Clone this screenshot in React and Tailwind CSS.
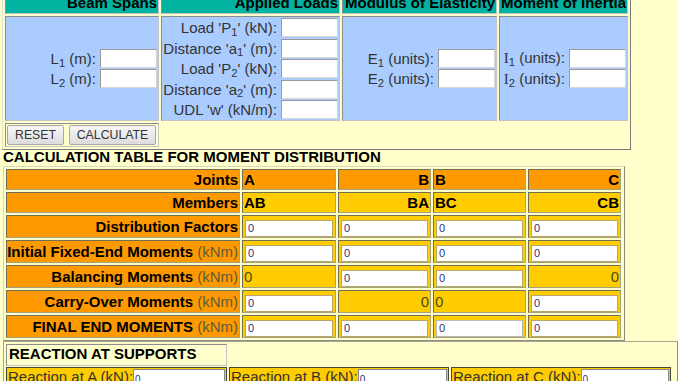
import React from 'react';

const inset = 'border border-t-[#8c8c8c] border-l-[#8c8c8c] border-b-[#c4c4c4] border-r-[#c4c4c4]';
const calcBorder = 'border border-t-[#6f6f52] border-l-[#6f6f52] border-b-[#a3a37c] border-r-[#a3a37c]';

const TopInput = () => (
    <input
        type="text"
        className="w-[57px] h-[19px] bg-white border border-t-[#9a9a9a] border-l-[#9a9a9a] border-b-[#d6d6d6] border-r-[#d6d6d6] outline-none"
    />
);

const Field = ({ children }) => (
    <div className="flex items-center justify-end h-[20.5px] gap-[4px]">
        <span className="text-[#333] whitespace-nowrap">{children}</span>
        <TopInput />
    </div>
);

const Kn = () => <span className="font-normal text-[#5c5c3c]">(kNm)</span>;

const CalcInput = ({ grey }) => (
    <div className={`bg-[#ffcc00] p-[2px] ${calcBorder}`}>
        <input
            type="text"
            defaultValue="0"
            className={`w-full h-full bg-white pl-[2px] text-[11px] text-[#2f2f6f] outline-none border ${grey ? 'border-[#b9b9b9]' : 'border-[#b8a66a]'}`}
        />
    </div>
);

const GoldCell = ({ right, children }) => (
    <div className={`bg-[#ffcc00] flex items-center text-[#4b4b16] ${right ? 'justify-end pr-[1px]' : 'pl-[1px]'} ${calcBorder}`}>
        {children}
    </div>
);

const Label = ({ children }) => (
    <div className={`bg-[#ff9900] flex items-center justify-end pr-[1px] font-bold text-black whitespace-nowrap ${calcBorder}`}>
        <span>{children}</span>
    </div>
);

const Reaction = ({ label }) => (
    <div className="bg-[#ffcc00] border border-[#4a4a30] flex items-start pl-[1px] h-[24px]">
        <span className="text-[#333] whitespace-nowrap">Reaction at {label} (kN):</span>
        <input
            type="text"
            defaultValue="0"
            className="flex-1 min-w-0 h-[21px] mt-[1px] mr-[1px] bg-white border border-[#8a8a8a] pl-[1px] text-[10px] text-[#2f2f6f] outline-none"
        />
    </div>
);

export default function App() {
    return (
        <div className="h-[381px] overflow-hidden bg-[#ffffcc] font-['Liberation_Sans',Arial,sans-serif] text-[15px] leading-[17px]">
            {/* Input section */}
            <div className="-mt-[11px] ml-[2px] w-[629px] p-[2px] border border-t-[#e0e0d0] border-l-[#e0e0d0] border-b-[#7c7c7c] border-r-[#7c7c7c]">
                <div className="grid grid-cols-[154px_179px_155px_129px] gap-[2px]">
                    {['Beam Spans', 'Applied Loads', 'Modulus of Elasticity', 'Moment of Inertia'].map((h) => (
                        <div key={h} className={`bg-[#00b3a0] h-[22px] pt-[1px] pr-[1px] text-right font-bold text-black whitespace-nowrap overflow-hidden ${inset}`}>
                            {h}
                        </div>
                    ))}

                    <div className={`bg-[#aaccff] h-[105px] flex flex-col justify-center pr-[1px] ${inset}`}>
                        <Field>L<sub>1</sub> (m):</Field>
                        <Field>L<sub>2</sub> (m):</Field>
                    </div>
                    <div className={`bg-[#aaccff] h-[105px] flex flex-col justify-center pr-[1px] ${inset}`}>
                        <Field>Load 'P<sub>1</sub>' (kN):</Field>
                        <Field>Distance 'a<sub>1</sub>' (m):</Field>
                        <Field>Load 'P<sub>2</sub>' (kN):</Field>
                        <Field>Distance 'a<sub>2</sub>' (m):</Field>
                        <Field>UDL 'w' (kN/m):</Field>
                    </div>
                    <div className={`bg-[#aaccff] h-[105px] flex flex-col justify-center pr-[1px] ${inset}`}>
                        <Field>E<sub>1</sub> (units):</Field>
                        <Field>E<sub>2</sub> (units):</Field>
                    </div>
                    <div className={`bg-[#aaccff] h-[105px] flex flex-col justify-center pr-[1px] ${inset}`}>
                        <Field><span className="font-['Liberation_Serif',serif]">I</span><sub>1</sub> (units):</Field>
                        <Field><span className="font-['Liberation_Serif',serif]">I</span><sub>2</sub> (units):</Field>
                    </div>

                    <div className={`h-[24px] p-[1px] flex gap-[5px] ${inset}`}>
                        <button className="w-[57px] h-[20px] rounded-[2px] border border-[#a9a9a9] bg-gradient-to-b from-[#f7f7f7] to-[#dcdcdc] text-[12.3px] leading-none text-[#333]">
                            RESET
                        </button>
                        <button className="w-[87px] h-[20px] rounded-[2px] border border-[#a9a9a9] bg-gradient-to-b from-[#f7f7f7] to-[#dcdcdc] text-[12.3px] leading-none text-[#333]">
                            CALCULATE
                        </button>
                    </div>
                </div>
            </div>

            <div className="pl-[3px] leading-[14px] font-bold text-black">CALCULATION TABLE FOR MOMENT DISTRIBUTION</div>

            {/* Moment distribution table */}
            <div className="mt-[2px] ml-[3px] w-[622px] p-[2px] border border-t-[#d8d8c0] border-l-[#d8d8c0] border-b-[#8c8c7c] border-r-[#8c8c7c]">
                <div className="grid grid-cols-[234px_94px_93px_93px_93px] grid-rows-[21px_21px_23px_23px_23px_23px_23px] gap-[2px]">
                    <Label>Joints</Label>
                    <div className={`bg-[#ff9900] pl-[1px] flex items-center font-bold ${calcBorder}`}>A</div>
                    <div className={`bg-[#ff9900] pr-[1px] flex items-center justify-end font-bold ${calcBorder}`}>B</div>
                    <div className={`bg-[#ff9900] pl-[1px] flex items-center font-bold ${calcBorder}`}>B</div>
                    <div className={`bg-[#ff9900] pr-[1px] flex items-center justify-end font-bold ${calcBorder}`}>C</div>

                    <Label>Members</Label>
                    <div className={`bg-[#ffcc00] pl-[1px] flex items-center font-bold ${calcBorder}`}>AB</div>
                    <div className={`bg-[#ffcc00] pr-[1px] flex items-center justify-end font-bold ${calcBorder}`}>BA</div>
                    <div className={`bg-[#ffcc00] pl-[1px] flex items-center font-bold ${calcBorder}`}>BC</div>
                    <div className={`bg-[#ffcc00] pr-[1px] flex items-center justify-end font-bold ${calcBorder}`}>CB</div>

                    <Label>Distribution Factors</Label>
                    <CalcInput />
                    <CalcInput />
                    <CalcInput />
                    <CalcInput />

                    <Label>Initial Fixed-End Moments <Kn /></Label>
                    <CalcInput />
                    <CalcInput />
                    <CalcInput />
                    <CalcInput />

                    <Label>Balancing Moments <Kn /></Label>
                    <GoldCell>0</GoldCell>
                    <CalcInput />
                    <CalcInput />
                    <GoldCell right>0</GoldCell>

                    <Label>Carry-Over Moments <Kn /></Label>
                    <CalcInput />
                    <GoldCell right>0</GoldCell>
                    <GoldCell>0</GoldCell>
                    <CalcInput />

                    <Label>FINAL END MOMENTS <Kn /></Label>
                    <CalcInput />
                    <CalcInput />
                    <CalcInput grey />
                    <CalcInput />
                </div>
            </div>

            {/* Reactions */}
            <div className="ml-[3px] w-[675px] p-[2px] border border-t-[#a8a890] border-l-[#a8a890] border-b-[#8c8c7c] border-r-[#8c8c7c]">
                <div className={`w-[221px] h-[22px] pl-[2px] font-bold text-black ${inset}`}>REACTION AT SUPPORTS</div>
                <div className="mt-[1px] grid grid-cols-[221px_220px_220px] gap-[2px]">
                    <Reaction label="A" />
                    <Reaction label="B" />
                    <Reaction label="C" />
                </div>
            </div>
        </div>
    );
}
